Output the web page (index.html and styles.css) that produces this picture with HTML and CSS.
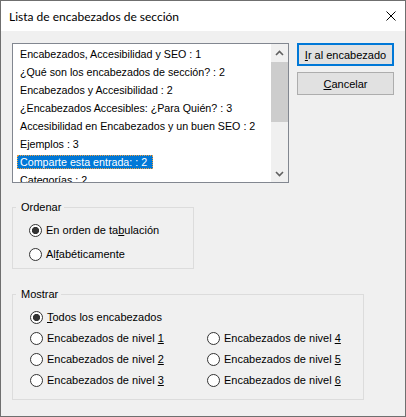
FILE: index.html
```html
<!DOCTYPE html>
<html lang="es">
<head>
<meta charset="utf-8">
<title>Lista de encabezados de sección</title>
<link rel="stylesheet" href="styles.css">
</head>
<body>
<div class="window">
  <div class="titlebar">
    <span class="title">Lista de encabezados de sección</span>
    <svg class="close" width="10" height="10" viewBox="0 0 10 10" aria-label="Cerrar"><path d="M0.5 0.5L9.5 9.5M9.5 0.5L0.5 9.5" stroke="#000" stroke-width="1" fill="none"/></svg>
  </div>
  <div class="body">
    <div class="toprow">
      <div class="listbox">
        <ul class="items">
          <li><span>Encabezados, Accesibilidad y SEO : 1</span></li>
          <li><span>¿Qué son los encabezados de sección? : 2</span></li>
          <li><span>Encabezados y Accesibilidad : 2</span></li>
          <li><span>¿Encabezados Accesibles: ¿Para Quién? : 3</span></li>
          <li><span>Accesibilidad en Encabezados y un buen SEO : 2</span></li>
          <li><span>Ejemplos : 3</span></li>
          <li class="selected"><span>Comparte esta entrada: : 2</span></li>
          <li><span>Categorías : 2</span></li>
        </ul>
        <div class="scrollbar">
          <div class="sb-btn"><svg width="9" height="6" viewBox="0 0 9 6"><path d="M1 5L4.5 1.5L8 5" stroke="#606060" stroke-width="1.6" fill="none"/></svg></div>
          <div class="sb-track"><div class="sb-thumb"></div></div>
          <div class="sb-btn"><svg width="9" height="6" viewBox="0 0 9 6"><path d="M1 1L4.5 4.5L8 1" stroke="#606060" stroke-width="1.6" fill="none"/></svg></div>
        </div>
      </div>
      <div class="buttons">
        <button class="btn default"><u>I</u>r al encabezado</button>
        <button class="btn"><u>C</u>ancelar</button>
      </div>
    </div>

    <div class="group ordenar">
      <span class="legend">Ordenar</span>
      <label class="radio-row"><input class="radio" type="radio" name="ord" checked><span>En orden de ta<u>b</u>ulación</span></label>
      <label class="radio-row"><input class="radio" type="radio" name="ord"><span>Al<u>f</u>abéticamente</span></label>
    </div>

    <div class="group mostrar">
      <span class="legend">Mostrar</span>
      <label class="radio-row todos"><input class="radio" type="radio" name="lvl" checked><span><u>T</u>odos los encabezados</span></label>
      <label class="radio-row"><input class="radio" type="radio" name="lvl"><span>Encabezados de nivel <u>1</u></span></label>
      <label class="radio-row"><input class="radio" type="radio" name="lvl"><span>Encabezados de nivel <u>4</u></span></label>
      <label class="radio-row"><input class="radio" type="radio" name="lvl"><span>Encabezados de nivel <u>2</u></span></label>
      <label class="radio-row"><input class="radio" type="radio" name="lvl"><span>Encabezados de nivel <u>5</u></span></label>
      <label class="radio-row"><input class="radio" type="radio" name="lvl"><span>Encabezados de nivel <u>3</u></span></label>
      <label class="radio-row"><input class="radio" type="radio" name="lvl"><span>Encabezados de nivel <u>6</u></span></label>
    </div>
  </div>
</div>
</body>
</html>
```

FILE: styles.css
```css
* { box-sizing: border-box; }
html, body { margin: 0; padding: 0; background: #f0f0f0; }
body {
  font-family: "Liberation Sans", Arial, sans-serif;
  font-size: 11px;
  color: #000;
}
u { text-underline-offset: 1px; }

.window {
  width: 406px;
  height: 417px;
  border: 1px solid #6f6f6f;
  background: #f0f0f0;
  display: flex;
  flex-direction: column;
}

.titlebar {
  flex: none;
  height: 30px;
  background: #fff;
  display: flex;
  align-items: center;
  justify-content: space-between;
  padding: 0 9px 0 8px;
}
.title {
  font-family: Lato, "Noto Sans", sans-serif;
  font-size: 12px;
  color: #000;
}
.close { display: block; }

.body {
  padding: 12px 0 0 11px;
  display: flex;
  flex-direction: column;
}

.toprow { display: flex; align-items: flex-start; }

.listbox {
  width: 277px;
  height: 140px;
  border: 1px solid #828790;
  background: #fff;
  display: flex;
  overflow: hidden;
}
.items {
  list-style: none;
  margin: 0;
  padding: 1px 0 0 0;
  flex: 1;
  overflow: hidden;
  font-size: 10.7px;
}
.items li {
  height: 18px;
  padding: 2px 0 2px 5px;
  white-space: nowrap;
}
.items li span {
  display: inline-block;
  height: 14px;
  line-height: 12px;
  padding: 0 5px 0 2px;
  border: 1px solid transparent;
  margin-left: -1px;
}
.items li.selected span {
  background: #0078d7;
  color: #fff;
  border: 1px dotted #f0a040;
}

.scrollbar {
  flex: none;
  width: 17px;
  background: #f0f0f0;
  display: flex;
  flex-direction: column;
}
.sb-btn {
  height: 17px;
  display: flex;
  align-items: center;
  justify-content: center;
}
.sb-btn svg { display: block; }
.sb-track { flex: 1; }
.sb-thumb { margin-top: 1px; height: 60px; background: #cdcdcd; }

.buttons {
  margin-left: 8px;
  display: flex;
  flex-direction: column;
  gap: 6px;
}
.btn {
  width: 97px;
  height: 23px;
  padding: 0;
  font: inherit;
  color: #000;
  background: #e1e1e1;
  border: 1px solid #adadad;
}
.btn.default { border: 2px solid #0078d7; }

.group {
  position: relative;
  border: 1px solid #dcdcdc;
}
.legend {
  position: absolute;
  top: -7px;
  left: 3px;
  padding: 0 3px 0 5px;
  line-height: 13px;
  background: #f0f0f0;
}
.ordenar {
  width: 182px;
  margin-top: 24px;
  padding: 16px 0 7px 16px;
  display: flex;
  flex-direction: column;
  gap: 11px;
}
.mostrar {
  width: 352px;
  margin-top: 25px;
  padding: 16px 0 12px 17px;
  display: grid;
  grid-template-columns: 177px auto;
  row-gap: 8px;
}
.todos { grid-column: 1 / -1; }

.radio-row {
  display: flex;
  align-items: center;
  height: 13px;
  line-height: 13px;
  gap: 4px;
  white-space: nowrap;
}
.radio {
  -webkit-appearance: none;
  appearance: none;
  flex: none;
  margin: 0;
  width: 13px;
  height: 13px;
  border: 1px solid #333;
  border-radius: 50%;
  background: #fff;
}
.radio:checked {
  background: radial-gradient(circle, #333 0 3.3px, #fff 3.9px);
}
```
